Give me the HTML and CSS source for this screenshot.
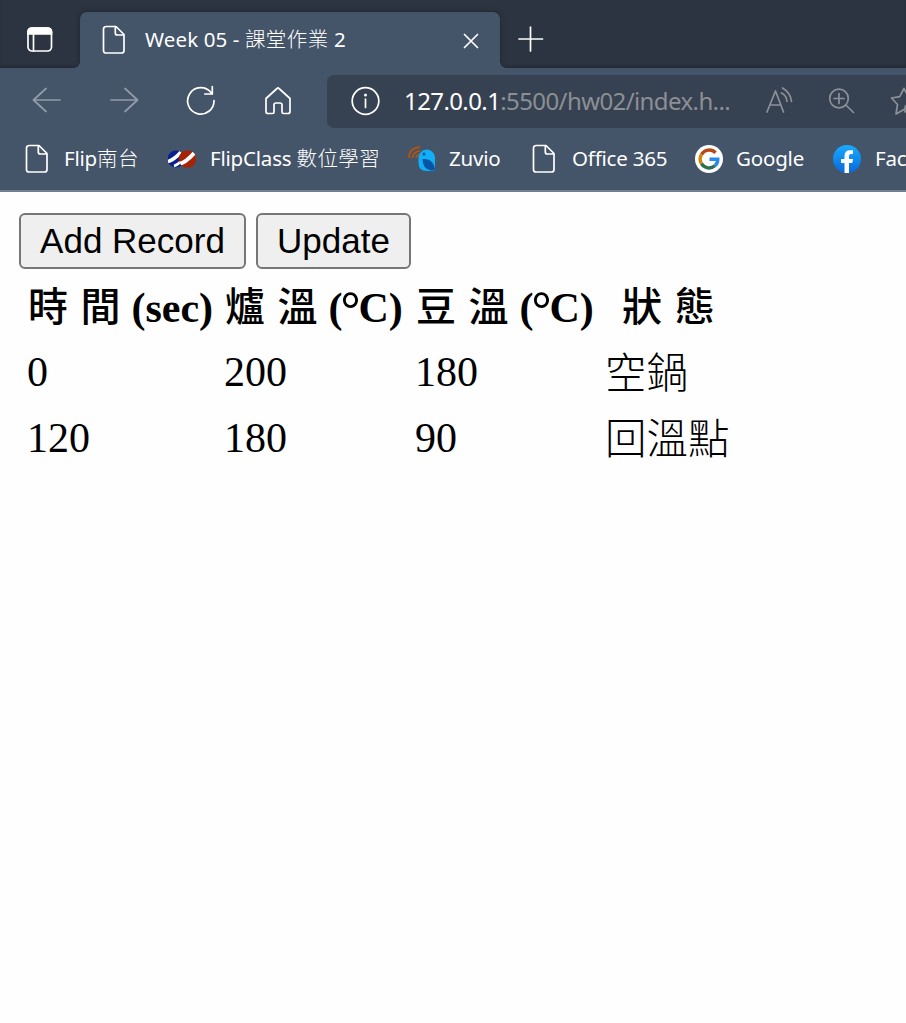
FILE: index.html
```html
<!DOCTYPE html>
<html lang="zh-Hant">
<head>
<meta charset="utf-8">
<title>Week 05 - 課堂作業 2</title>
<link rel="stylesheet" href="styles.css">
</head>
<body>
<svg class="defs" width="0" height="0">
  <symbol id="doc" viewBox="0 0 24 30"><path d="M4.500 1.500H14L22 9.500V25.500Q22 28 19.500 28H4Q1.500 28 1.500 25.500V4Q1.500 1.500 4.500 1.500ZM13.300 1.800V8Q13.300 10 15.300 10H21.800"/></symbol>
</svg>
<header class="browser">
  <div class="tabstrip">
    <div class="tab-actions"><svg class="line" width="28" height="28" viewBox="0 0 28 28"><rect x="2" y="2" width="23.500" height="23" rx="4"/><path d="M2 8V6Q2 2 6 2H21.500Q25.500 2 25.500 6V8Z" fill="#fff"/><path d="M7.500 8V25"/></svg></div>
    <div class="tab">
      <svg class="line doc"><use href="#doc"/></svg>
      <span class="tab-title">Week 05 - <span class="cjk">課堂作業</span> 2</span>
      <svg class="line close" width="16" height="16" viewBox="0 0 16 16"><path d="M1.500 1.500L14.500 14.500M14.500 1.500L1.500 14.500"/></svg>
    </div>
    <svg class="line plus" width="26" height="26" viewBox="0 0 26 26"><path d="M12.500 1V25M1 13H24.500"/></svg>
  </div>
  <nav class="toolbar">
    <svg class="line dim back" width="30" height="28" viewBox="0 0 30 28"><path d="M28 14H1.500M14 2.500L1.500 14L14 25.500"/></svg>
    <svg class="line dim forward" width="30" height="28" viewBox="0 0 30 28"><path d="M2 14H28.500M16 2.500L28.500 14L16 25.500"/></svg>
    <svg class="line reload" width="30" height="30" viewBox="0 0 30 30"><path d="M28 15.500A13.200 13.200 0 1 1 25 7.500L26 9M26.300 1.500V9H18.800"/></svg>
    <svg class="line home" width="28" height="30" viewBox="0 0 28 30"><path d="M2 12.500L13 2.500Q14 1.500 15 2.500L26 12.500V25.500Q26 27.500 24 27.500H19.500Q18 27.500 18 26V19Q18 17 16 17H12Q10 17 10 19V26Q10 27.500 8.500 27.500H4Q2 27.500 2 25.500Z"/></svg>
    <div class="address">
      <svg class="line info" width="30" height="30" viewBox="0 0 30 30"><circle cx="15.500" cy="15" r="13.300"/><path d="M15.500 13V21.500"/><circle class="dot" cx="15.500" cy="9" r="1.500"/></svg>
      <span class="url"><b>127.0.0.1</b>:5500/hw02/index.h...</span>
      <svg class="line grey read" width="28" height="28" viewBox="0 0 28 28"><path d="M1 25L9.500 4L17.500 25M4.200 18H14.500M16.500 1Q24.500 5.500 25.500 14.500M15.500 6Q20.500 8.500 21 14.500"/></svg>
      <svg class="line grey search" width="28" height="28" viewBox="0 0 28 28"><circle cx="11" cy="11.500" r="9.300"/><path d="M17.800 18L25.500 25.500M11 6.500V16.500M6 11.500H16"/></svg>
      <svg class="line grey star" width="28" height="28" viewBox="0 0 28 28"><path d="M14 1.500L9.700 9.600L1.500 11L7.500 17.500L6 27L14 22.500M14 1.500L18 9L26 11M15 25V21Q15 18 18 18"/></svg>
    </div>
  </nav>
  <nav class="bookmarks">
    <a class="bm b1"><svg class="line doc"><use href="#doc"/></svg><span>Flip<span class="cjk">南台</span></span></a>
    <a class="bm b2"><svg width="28" height="18" viewBox="0 0 28 18"><defs><clipPath id="l"><circle cx="8" cy="9" r="8.500"/></clipPath><clipPath id="r"><circle cx="19.500" cy="9" r="8.800"/></clipPath></defs><g clip-path="url(#l)"><path fill="#08218c" d="M0 0H18V18H0Z"/><path d="M-1 12Q6 10 13 2" fill="none" stroke="#fff" stroke-width="3.500"/></g><path d="M6 16Q12 14 17 6" fill="none" stroke="#fff" stroke-width="2.500"/><g clip-path="url(#r)"><path fill="#a52408" d="M10 0H29V18H10Z"/><path d="M10 14Q17 14 28 1" fill="none" stroke="#fff" stroke-width="4"/></g></svg><span>FlipClass <span class="cjk">數位學習</span></span></a>
    <a class="bm b3"><svg width="28" height="26" viewBox="0 0 28 26"><g fill="none" stroke="#b5530f" stroke-width="1.700"><path d="M1 12Q1 2 12 1.200M4.500 12Q5 5.500 12 4.800M8 12Q8.500 8.500 12 8"/></g><path fill="#10aff7" d="M10.500 11A8.300 8.300 0 0 1 27 11V25H19Q10.500 25 10.500 17Z"/><path fill="#0754a5" d="M14.500 13Q26 12 27 24.500H23Q14.500 23 14.500 13Z"/><circle cx="16" cy="8" r="1.500" fill="#0754a5"/></svg><span>Zuvio</span></a>
    <a class="bm b4"><svg class="line doc"><use href="#doc"/></svg><span>Office 365</span></a>
    <a class="bm b5"><svg width="28" height="28" viewBox="0 0 28 28"><circle cx="14" cy="14" r="14" fill="#fff"/><g fill="none" stroke-width="3.400"><path stroke="#b84716" d="M6.500 9.500A8.800 8.800 0 0 1 20.500 7.700"/><path stroke="#cf850b" d="M6.500 9.500A8.800 8.800 0 0 0 6.500 18.700"/><path stroke="#2d6f50" d="M6.500 18.700A8.800 8.800 0 0 0 19.800 20.800"/><path stroke="#2989ec" d="M14.500 14.200H22.800Q22.800 18.500 19.800 20.800"/></g></svg><span>Google</span></a>
    <a class="bm b6"><svg width="28" height="28" viewBox="0 0 28 28"><defs><linearGradient id="fb" x2="0" y2="1"><stop stop-color="#18acfe"/><stop offset="1" stop-color="#0868dd"/></linearGradient></defs><circle cx="14" cy="14" r="14" fill="url(#fb)"/><path fill="#fff" d="M11.500 28V18H8V14H11.500V11Q11.500 5.200 17 5.200H20V9H18Q16 9 16 11V14H20L19.300 18H16V28Z"/></svg><span>Facebook</span></a>
  </nav>
</header>
<main class="page">
  <div class="buttons"><button class="add">Add Record</button><button class="update">Update</button></div>
  <table class="records">
    <thead><tr><th class="c1"><span class="zh">時 間</span> (sec)</th><th class="c2"><span class="zh">爐 溫</span> (<span class="deg">°</span>C)</th><th class="c3"><span class="zh">豆 溫</span> (<span class="deg">°</span>C)</th><th class="c4"><span class="zh">狀 態</span></th></tr></thead>
    <tbody>
      <tr><td>0</td><td>200</td><td>180</td><td class="state">空鍋</td></tr>
      <tr><td>120</td><td>180</td><td>90</td><td class="state">回溫點</td></tr>
    </tbody>
  </table>
</main>
</body>
</html>
```
FILE: styles.css
```css
* { box-sizing: border-box; }
html { overflow: hidden; }
body { margin: 0; height: 1023px; overflow: hidden; background: #fefefe; }
svg { flex: none; display: block; }
.defs { position: absolute; }
.line { fill: none; stroke: #fff; stroke-width: 1.7; stroke-linecap: round; stroke-linejoin: round; }
.dot { fill: #fff; stroke: none; }
.dim { stroke: #929baa; }
.grey { stroke: #8c9198; }
.doc { width: 24px; height: 30px; }

.browser { height: 192px; background: #445469; border-bottom: 2px solid #748092; overflow: hidden; color: #fff; font-family: "Noto Sans", "Noto Sans CJK TC", sans-serif; }
.browser span { white-space: nowrap; }
.browser .cjk { font-family: "Noto Sans CJK TC", sans-serif; font-weight: 300; letter-spacing: .4px; line-height: 1; }
.tabstrip { height: 68px; display: flex; background: #2b3440; box-shadow: inset 0 -2px 2px #242c37; }
.tab-actions { width: 80px; height: 68px; padding: 26px 0 0 26px; }
.tab { position: relative; width: 420px; height: 56px; margin-top: 12px; padding: 0 21px 0 22px; display: flex; align-items: center; background: #445469; border-radius: 7px 7px 0 0; box-shadow: 0 0 4px #1b222c; }
.tab::before, .tab::after { content: ""; position: absolute; bottom: 0; width: 6px; height: 6px; }
.tab::before { left: -6px; background: radial-gradient(circle at 0 0, transparent 5.5px, #445469 6px); }
.tab::after { right: -6px; background: radial-gradient(circle at 100% 0, transparent 5.5px, #445469 6px); }
.tab-title { flex: 1; margin: -2px 0 0 19px; font-size: 20.5px; letter-spacing: .12px; }
.close { margin-top: 1px; }
.plus { margin: 26px 0 0 18px; }

.toolbar { position: relative; height: 64px; padding-top: 7px; display: flex; background: #445469; }
.back { margin: 11px 0 0 32px; }
.forward { margin: 11px 0 0 47px; }
.reload { margin: 10px 0 0 47px; }
.home { margin: 11px 0 0 48px; }
.address { flex: none; width: 600px; height: 53px; margin-left: 35px; padding: 0 0 2px 23px; display: flex; align-items: center; background: #364252; border-radius: 7px; }
.url { width: 332px; margin-left: 24px; font-size: 24px; letter-spacing: -.6px; color: #8c8f94; }
.url b { font-weight: 400; color: #fff; }
.read { margin-left: 30px; }
.search { margin-left: 34px; }
.star { margin-left: 34px; }

.bookmarks { height: 58px; padding-left: 25px; display: flex; }
.bm { flex: none; height: 54px; display: flex; align-items: center; font-size: 20.5px; letter-spacing: -.2px; }
.bm > span { margin-top: -2px; }
.b1 { width: 143px; gap: 15px; }
.b2 { width: 240px; gap: 14px; }
.b3 { width: 124px; gap: 13px; }
.b4 { width: 163px; gap: 16px; }
.b5 { width: 138px; gap: 13px; }
.b6 { gap: 14px; }

.page { padding: 21px 0 0 19px; }
.buttons { display: flex; gap: 10px; }
.buttons button { height: 56px; padding: 0; border: 2px solid #767676; border-radius: 6px; background: #efefef; color: #000; font: 35px "Liberation Sans", sans-serif; }
.add { width: 227px; }
.update { width: 155px; }
.records { table-layout: fixed; width: 716px; border-collapse: collapse; font: 42px/66px "Liberation Serif", "Noto Sans CJK TC", serif; }
.records th, .records td { height: 66px; padding: 0 0 6px 8px; text-align: left; white-space: nowrap; line-height: 60px; }
.records th { padding: 6px 0 0 8px; line-height: 66px; height: 72px; }
.zh { font-weight: 500; font-size: 40px; letter-spacing: 1.3px; position: relative; top: -1px; left: 1px; }
.deg { display: inline-block; margin: 0 -2px; font-size: 50px; line-height: 0; position: relative; top: 4px; }
.c1 { width: 197px; }
.c2 { width: 191px; }
.c3 { width: 190px; }
.records th.c4 { text-align: center; }
.records .c4 .zh { left: -1px; }
.records td.state { padding-bottom: 2px; font-weight: 300; font-size: 41.5px; }
```
